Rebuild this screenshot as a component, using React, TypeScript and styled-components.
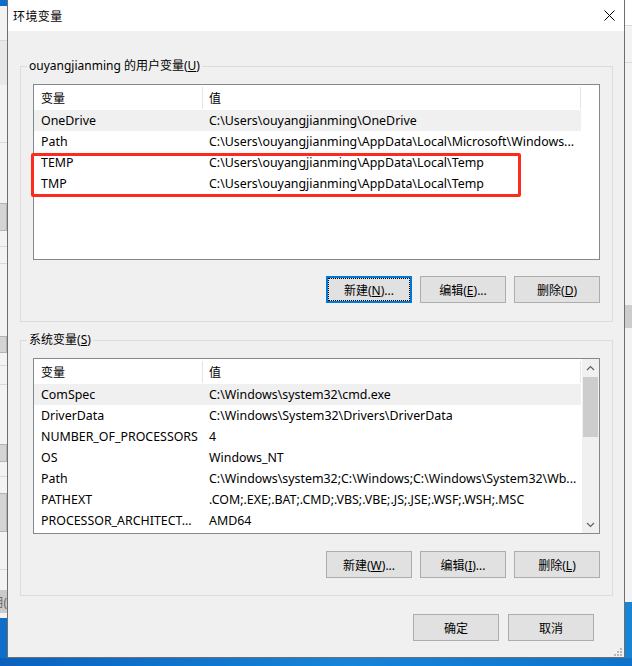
import React from 'react';
import styled, { createGlobalStyle, css } from 'styled-components';

const FONT = `"Segoe UI", "Noto Sans", "Noto Sans CJK SC", sans-serif`;

const GlobalStyle = createGlobalStyle`
  html, body { margin: 0; padding: 0; }
  body {
    width: 632px; height: 666px; overflow: hidden;
    background: #0b6fc9;
    font-family: ${FONT};
    font-size: 12px;
    color: #000;
  }
  * { box-sizing: border-box; }
`;

const Screen = styled.div`
  width: 632px;
  height: 666px;
  display: flex;
  flex-direction: column;
`;

const Stage = styled.div`
  display: flex;
  height: 658px;
`;

const Desktop = styled.div`
  flex: 1;
  background: linear-gradient(90deg, #0a62bc 0%, #1784d6 55%, #0e72cb 100%);
`;

const Strip = styled.div`
  width: 7px;
  display: flex;
  flex-direction: column;
  background: #f3f3f3;
  overflow: hidden;
`;

const StripPiece = styled.div<{ $h?: number; $bg: string; $edge?: string }>`
  flex: ${(p) => (p.$h ? `0 0 ${p.$h}px` : '1 1 auto')};
  background: ${(p) => p.$bg};
  display: flex;
  align-items: center;
  justify-content: flex-end;
  overflow: hidden;
  font-size: 12px;
  color: #6a6a6a;
  white-space: nowrap;
  ${(p) =>
    p.$edge &&
    css`
      border-top: 1px solid ${p.$edge};
      border-bottom: 1px solid ${p.$edge};
      border-right: 1px solid ${p.$edge};
    `}
`;

const Dialog = styled.div`
  position: relative;
  width: 618px;
  display: flex;
  flex-direction: column;
  border: 1px solid #6e6e6e;
  border-top: none;
  background: #f0f0f0;
`;

const TitleBar = styled.div`
  height: 31px;
  flex: 0 0 31px;
  background: #fff;
  display: flex;
  align-items: center;
  justify-content: space-between;
  padding: 0 9px 0 5px;
`;

const Title = styled.span`
  font-size: 12px;
  letter-spacing: 0.4px;
`;

const CloseIcon = styled.svg`
  width: 11px;
  height: 11px;
  display: block;
`;

const Body = styled.div`
  flex: 1;
  display: flex;
  flex-direction: column;
  padding: 27px 11px 16px 12px;
`;

const Group = styled.fieldset<{ $top?: number; $bottom: number }>`
  margin: ${(p) => p.$top ?? 0}px 0 0 0;
  min-width: 0;
  border: 1px solid #dcdcdc;
  padding: 10px 12px ${(p) => p.$bottom}px 12px;
`;

const Legend = styled.legend`
  padding: 0 2px;
  margin-left: -6px;
  line-height: 16px;
  font-size: 12px;
`;

const ListWrap = styled.div`
  position: relative;
`;

const List = styled.div`
  height: 176px;
  border: 1px solid #828790;
  background: #fff;
  display: flex;
  overflow: hidden;
`;

const Table = styled.div`
  width: 547px;
  display: flex;
  flex-direction: column;
`;

const HeaderRow = styled.div`
  height: 25px;
  flex: 0 0 25px;
  display: flex;
  align-items: center;
`;

const HeaderCell = styled.div<{ $first?: boolean }>`
  position: relative;
  height: 100%;
  display: flex;
  align-items: center;
  ${(p) =>
    p.$first
      ? css`
          width: 168px;
          padding-left: 7px;
        `
      : css`
          flex: 1;
          padding-left: 7px;
          &::before,
          &::after {
            content: '';
            position: absolute;
            top: 2px;
            bottom: 1px;
            width: 1px;
            background: #e5e5e5;
          }
          &::before { left: 0; }
          &::after { right: 0; }
        `}
`;

const Row = styled.div<{ $selected?: boolean }>`
  height: 21px;
  flex: 0 0 21px;
  display: flex;
  align-items: center;
  background: ${(p) => (p.$selected ? '#f0f0f0' : 'transparent')};
`;

const Cell = styled.div<{ $first?: boolean }>`
  ${(p) => (p.$first ? css`width: 168px;` : css`flex: 1; min-width: 0;`)}
  padding-left: 7px;
  font-size: 12.4px;
  white-space: nowrap;
  overflow: hidden;
  text-overflow: ellipsis;
`;

const ScrollBar = styled.div`
  width: 17px;
  margin-left: auto;
  background: #f0f0f0;
  display: flex;
  flex-direction: column;
  align-items: center;
`;

const ScrollArrow = styled.div`
  width: 17px;
  height: 17px;
  flex: 0 0 17px;
  display: flex;
  align-items: center;
  justify-content: center;
`;

const ScrollTrack = styled.div`
  flex: 1;
  width: 100%;
  padding: 1px 1px 0 1px;
`;

const Thumb = styled.div`
  height: 60px;
  background: #cdcdcd;
`;

const Highlight = styled.div`
  position: absolute;
  left: -2px;
  top: 69px;
  width: 490px;
  height: 44px;
  border: 3px solid #fe2a1e;
  border-radius: 2px;
  pointer-events: none;
`;

const ButtonRow = styled.div<{ $gap: number }>`
  display: flex;
  justify-content: flex-end;
  gap: 8px;
  margin-top: ${(p) => p.$gap}px;
`;

const Footer = styled.div`
  display: flex;
  justify-content: flex-end;
  gap: 9px;
  margin-top: 18px;
  padding-right: 19px;
`;

const Button = styled.button<{ $default?: boolean }>`
  width: 86px;
  height: 27px;
  padding: 0;
  margin: 0;
  background: #e1e1e1;
  border: 1px solid #adadad;
  font-family: ${FONT};
  font-size: 12px;
  color: #000;
  display: flex;
  align-items: center;
  justify-content: center;
  ${(p) =>
    p.$default &&
    css`
      border-color: #0078d7;
      box-shadow: inset 0 0 0 1px #0078d7;
      outline: 1px dotted #000;
      outline-offset: -3px;
    `}
`;

const Grip = styled.svg`
  position: absolute;
  right: 2px;
  bottom: 1px;
  width: 8px;
  height: 8px;
`;

type Pair = [string, string];

const userVars: Pair[] = [
  ['OneDrive', 'C:\\Users\\ouyangjianming\\OneDrive'],
  ['Path', 'C:\\Users\\ouyangjianming\\AppData\\Local\\Microsoft\\Windows...'],
  ['TEMP', 'C:\\Users\\ouyangjianming\\AppData\\Local\\Temp'],
  ['TMP', 'C:\\Users\\ouyangjianming\\AppData\\Local\\Temp'],
];

const sysVars: Pair[] = [
  ['ComSpec', 'C:\\Windows\\system32\\cmd.exe'],
  ['DriverData', 'C:\\Windows\\System32\\Drivers\\DriverData'],
  ['NUMBER_OF_PROCESSORS', '4'],
  ['OS', 'Windows_NT'],
  ['Path', 'C:\\Windows\\system32;C:\\Windows;C:\\Windows\\System32\\Wb...'],
  ['PATHEXT', '.COM;.EXE;.BAT;.CMD;.VBS;.VBE;.JS;.JSE;.WSF;.WSH;.MSC'],
  ['PROCESSOR_ARCHITECT...', 'AMD64'],
];

type Piece = { h?: number; bg: string; edge?: string; text?: string };

const G = '#f3f3f3';
const L = '#d9d9d9';
const BL = '#d4d4d4';
const BE = '#b4b4b4';
const BLUE = '#0f6fc8';

const leftPieces: Piece[] = [
  { h: 6, bg: BLUE },
  { h: 34, bg: G },
  { h: 1, bg: L },
  { h: 44, bg: '#e8e8e8' },
  { h: 57, bg: G },
  { h: 1, bg: L },
  { h: 60, bg: G },
  { h: 28, bg: BL, edge: BE },
  { h: 15, bg: G },
  { h: 1, bg: L },
  { h: 16, bg: G },
  { h: 1, bg: L },
  { h: 72, bg: G },
  { h: 17, bg: BL, edge: BE },
  { h: 12, bg: G },
  { h: 1, bg: L },
  { h: 18, bg: G },
  { h: 1, bg: L },
  { h: 59, bg: G },
  { h: 18, bg: BL, edge: BE },
  { h: 14, bg: G },
  { h: 1, bg: L },
  { h: 16, bg: G },
  { h: 39, bg: BL, edge: BE },
  { h: 37, bg: G },
  { h: 1, bg: L },
  { h: 20, bg: G },
  { h: 23, bg: '#cacaca', text: '用(' },
  { h: 5, bg: G },
  { bg: BLUE },
];

const rightPieces: Piece[] = [
  { h: 25, bg: '#ffffff' },
  { h: 1, bg: L },
  { h: 36, bg: G },
  { h: 1, bg: L },
  { h: 242, bg: G },
  { h: 23, bg: '#cdcdcd' },
  { h: 274, bg: G },
  { bg: '#1784d6' },
];

function BackStrip({ pieces }: { pieces: Piece[] }) {
  return (
    <Strip>
      {pieces.map((p, i) => (
        <StripPiece key={i} $h={p.h} $bg={p.bg} $edge={p.edge}>
          {p.text}
        </StripPiece>
      ))}
    </Strip>
  );
}

function Chevron({ down }: { down?: boolean }) {
  return (
    <svg width="9" height="6" viewBox="0 0 9 6">
      <polyline
        points={down ? '1,1 4.5,4.5 8,1' : '1,5 4.5,1.5 8,5'}
        fill="none"
        stroke="#606060"
        strokeWidth="1.2"
      />
    </svg>
  );
}

function VarList({
  rows,
  scroll,
  mark,
}: {
  rows: Pair[];
  scroll?: boolean;
  mark?: boolean;
}) {
  return (
    <ListWrap>
      <List>
        <Table>
          <HeaderRow>
            <HeaderCell $first>变量</HeaderCell>
            <HeaderCell>值</HeaderCell>
          </HeaderRow>
          {rows.map(([k, v], i) => (
            <Row key={k + i} $selected={i === 0}>
              <Cell $first>{k}</Cell>
              <Cell>{v}</Cell>
            </Row>
          ))}
        </Table>
        {scroll && (
          <ScrollBar>
            <ScrollArrow>
              <Chevron />
            </ScrollArrow>
            <ScrollTrack>
              <Thumb />
            </ScrollTrack>
            <ScrollArrow>
              <Chevron down />
            </ScrollArrow>
          </ScrollBar>
        )}
      </List>
      {mark && <Highlight />}
    </ListWrap>
  );
}

function Label({ text, k, tail = '' }: { text: string; k: string; tail?: string }) {
  return (
    <span>
      {text}(<u>{k}</u>){tail}
    </span>
  );
}

export default function App() {
  return (
    <>
      <GlobalStyle />
      <Screen>
        <Stage>
          <BackStrip pieces={leftPieces} />
          <Dialog>
            <TitleBar>
              <Title>环境变量</Title>
              <CloseIcon viewBox="0 0 11 11">
                <path d="M0.5 0.5 L10.5 10.5 M10.5 0.5 L0.5 10.5" stroke="#000" strokeWidth="1" fill="none" />
              </CloseIcon>
            </TitleBar>
            <Body>
              <Group $bottom={18}>
                <Legend>
                  <Label text="ouyangjianming 的用户变量" k="U" />
                </Legend>
                <VarList rows={userVars} mark />
                <ButtonRow $gap={16}>
                  <Button $default>
                    <Label text="新建" k="N" tail="..." />
                  </Button>
                  <Button>
                    <Label text="编辑" k="E" tail="..." />
                  </Button>
                  <Button>
                    <Label text="删除" k="D" />
                  </Button>
                </ButtonRow>
              </Group>
              <Group $top={10} $bottom={17}>
                <Legend>
                  <Label text="系统变量" k="S" />
                </Legend>
                <VarList rows={sysVars} scroll />
                <ButtonRow $gap={17}>
                  <Button>
                    <Label text="新建" k="W" tail="..." />
                  </Button>
                  <Button>
                    <Label text="编辑" k="I" tail="..." />
                  </Button>
                  <Button>
                    <Label text="删除" k="L" />
                  </Button>
                </ButtonRow>
              </Group>
              <Footer>
                <Button>确定</Button>
                <Button>取消</Button>
              </Footer>
            </Body>
            <Grip viewBox="0 0 8 8">
              <rect x="6" y="0" width="2" height="2" fill="#b8b8b8" />
              <rect x="3" y="3" width="2" height="2" fill="#b8b8b8" />
              <rect x="6" y="3" width="2" height="2" fill="#b8b8b8" />
              <rect x="0" y="6" width="2" height="2" fill="#b8b8b8" />
              <rect x="3" y="6" width="2" height="2" fill="#b8b8b8" />
              <rect x="6" y="6" width="2" height="2" fill="#b8b8b8" />
            </Grip>
          </Dialog>
          <BackStrip pieces={rightPieces} />
        </Stage>
        <Desktop />
      </Screen>
    </>
  );
}
